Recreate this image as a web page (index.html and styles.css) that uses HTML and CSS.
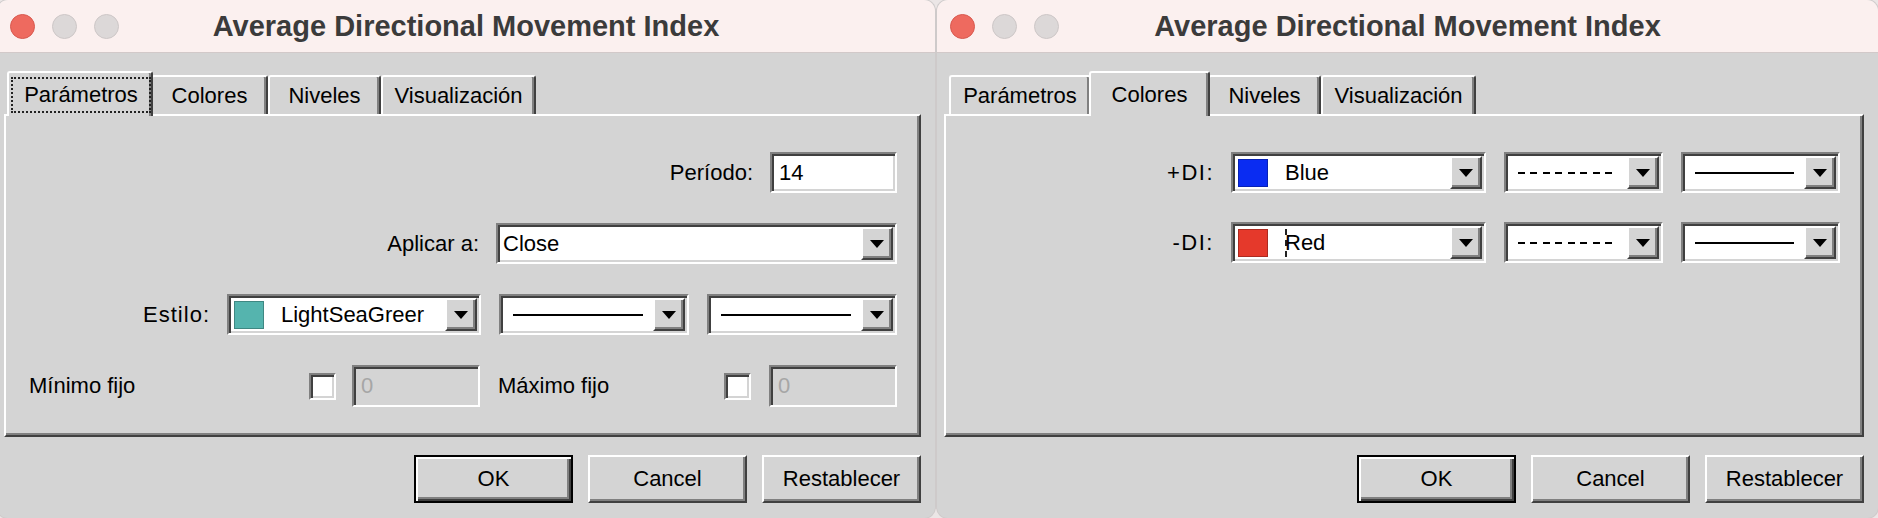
FILE: index.html
```html
<!DOCTYPE html>
<html lang="es">
<head>
    <meta charset="UTF-8">
    <meta name="viewport" content="width=device-width, initial-scale=1.0">
    <title>Average Directional Movement Index</title>
    <link rel="stylesheet" href="styles.css">
</head>
<body>
    <div class="desk">
        <!-- ventana 1: pestaña Parámetros -->
        <div class="window window-left">
            <div class="titlebar">
                <div class="lights">
                    <span class="light red"></span>
                    <span class="light"></span>
                    <span class="light"></span>
                </div>
                <div class="title">Average Directional Movement Index</div>
            </div>
            <div class="win-body">
                <div class="tabs">
                    <div class="tab tab-params active"><span class="focus">Parámetros</span></div>
                    <div class="tab tab-colors">Colores</div>
                    <div class="tab tab-levels">Niveles</div>
                    <div class="tab tab-view">Visualización</div>
                </div>
                <div class="panel">
                    <div class="row">
                        <label>Período:</label>
                        <div class="sunken input input-period">14</div>
                    </div>
                    <div class="row">
                        <label>Aplicar a:</label>
                        <div class="sunken combo combo-apply">
                            <div class="combo-value">Close</div>
                            <div class="raised drop"></div>
                        </div>
                    </div>
                    <div class="row">
                        <label class="wide-label">Estilo:</label>
                        <div class="fields">
                            <div class="sunken combo combo-color">
                                <div class="combo-value"><span class="swatch swatch-green"></span>LightSeaGreer</div>
                                <div class="raised drop"></div>
                            </div>
                            <div class="sunken combo combo-line">
                                <div class="combo-value line-value"><span class="line-solid"></span></div>
                                <div class="raised drop"></div>
                            </div>
                            <div class="sunken combo combo-line">
                                <div class="combo-value line-value"><span class="line-solid"></span></div>
                                <div class="raised drop"></div>
                            </div>
                        </div>
                    </div>
                    <div class="row-limits">
                        <div class="limit limit-min">
                            <label>Mínimo fijo</label>
                            <span class="sunken check"></span>
                            <div class="sunken input disabled">0</div>
                        </div>
                        <div class="limit limit-max">
                            <label>Máximo fijo</label>
                            <span class="sunken check"></span>
                            <div class="sunken input disabled">0</div>
                        </div>
                    </div>
                </div>
                <div class="actions">
                    <div class="btn default">OK</div>
                    <div class="btn raised">Cancel</div>
                    <div class="btn raised">Restablecer</div>
                </div>
            </div>
        </div>

        <!-- ventana 2: pestaña Colores -->
        <div class="window window-right">
            <div class="titlebar">
                <div class="lights">
                    <span class="light red"></span>
                    <span class="light"></span>
                    <span class="light"></span>
                </div>
                <div class="title">Average Directional Movement Index</div>
            </div>
            <div class="win-body">
                <div class="tabs">
                    <div class="tab tab-params">Parámetros</div>
                    <div class="tab tab-colors active">Colores</div>
                    <div class="tab tab-levels">Niveles</div>
                    <div class="tab tab-view">Visualización</div>
                </div>
                <div class="panel panel-colors">
                    <div class="row">
                        <label class="di-label">+DI:</label>
                        <div class="fields">
                            <div class="sunken combo combo-color wide">
                                <div class="combo-value"><span class="swatch swatch-blue"></span>Blue</div>
                                <div class="raised drop"></div>
                            </div>
                            <div class="sunken combo combo-style">
                                <div class="combo-value line-value"><span class="line-dash"></span></div>
                                <div class="raised drop"></div>
                            </div>
                            <div class="sunken combo combo-style">
                                <div class="combo-value line-value"><span class="line-solid"></span></div>
                                <div class="raised drop"></div>
                            </div>
                        </div>
                    </div>
                    <div class="row">
                        <label class="di-label">-DI:</label>
                        <div class="fields">
                            <div class="sunken combo combo-color wide">
                                <div class="combo-value"><span class="swatch swatch-red"></span><span class="caret"></span>Red</div>
                                <div class="raised drop"></div>
                            </div>
                            <div class="sunken combo combo-style">
                                <div class="combo-value line-value"><span class="line-dash"></span></div>
                                <div class="raised drop"></div>
                            </div>
                            <div class="sunken combo combo-style">
                                <div class="combo-value line-value"><span class="line-solid"></span></div>
                                <div class="raised drop"></div>
                            </div>
                        </div>
                    </div>
                </div>
                <div class="actions">
                    <div class="btn default">OK</div>
                    <div class="btn raised">Cancel</div>
                    <div class="btn raised">Restablecer</div>
                </div>
            </div>
        </div>
    </div>
</body>
</html>
```

FILE: styles.css
```css
* {
    box-sizing: border-box;
}

body {
    margin: 0;
    background: #ebe6e6;
    font-family: "Liberation Sans", Arial, sans-serif;
    font-size: 22px;
    color: #000;
    overflow: hidden;
}

.desk {
    display: flex;
    gap: 2px;
    height: 518px;
}

.window {
    flex: none;
    display: flex;
    flex-direction: column;
    height: 518px;
    background: #d4d4d4;
    border-radius: 11px;
    overflow: hidden;
    box-shadow: 0 0 0 1px rgba(0,0,0,0.12);
}

.window-left {
    width: 938px;
    margin-left: -3px;
}

.window-right {
    width: 941px;
}

/* barra de título estilo macOS */
.titlebar {
    flex: none;
    height: 53px;
    display: grid;
    grid-template-columns: 1fr auto 1fr;
    align-items: center;
    background: #fbf0ef;
    border-bottom: 1px solid #d2c9c9;
}

.lights {
    display: flex;
    gap: 17px;
    padding-left: 13px;
}

.light {
    width: 25px;
    height: 25px;
    border-radius: 50%;
    background: #dcd8d8;
    border: 1px solid #cdc7c7;
}

.light.red {
    background: #ee6a5f;
    border-color: #d8594f;
}

.title {
    font-weight: bold;
    font-size: 29px;
    color: #3b3b3b;
}

.win-body {
    flex: 1;
    padding: 18px 14px 0 7px;
}

/* pestañas */
.tabs {
    display: flex;
    align-items: flex-end;
    height: 43px;
    padding-left: 5px;
}

.tab {
    width: var(--w);
    height: 39px;
    display: flex;
    align-items: center;
    justify-content: center;
    border: 2px solid;
    border-color: #fff #404040 transparent #fff;
    border-bottom: 0;
    border-radius: 3px 3px 0 0;
    box-shadow: inset -2px 0 0 #808080;
}

.tab-params { --w: 142px; }
.tab-colors { --w: 117px; }
.tab-levels { --w: 113px; }
.tab-view { --w: 155px; }

.tab.active {
    position: relative;
    z-index: 1;
    width: calc(var(--w) + 4px);
    height: 45px;
    margin: 0 -2px -2px;
    background: #d4d4d4;
}

.focus {
    align-self: stretch;
    flex: 1;
    display: flex;
    align-items: center;
    justify-content: center;
    margin: 4px 0 3px 2px;
    border: 2px dotted #222;
}

.panel {
    height: 323px;
    display: flex;
    flex-direction: column;
    gap: 30px;
    padding: 36px 22px 0 0;
    border: 2px solid;
    border-color: #fff #404040 #404040 #fff;
    box-shadow: inset -2px -2px 0 #808080;
}

.panel-colors {
    gap: 29px;
}

.row {
    height: 41px;
    display: flex;
    align-items: center;
    justify-content: flex-end;
    gap: 17px;
}

.wide-label {
    letter-spacing: 1px;
}

.di-label {
    letter-spacing: 1.5px;
}

.fields {
    display: flex;
    gap: 18px;
    height: 100%;
}

/* bordes clásicos */
.sunken {
    background: #fff;
    border: 2px solid;
    border-color: #808080 #fff #fff #808080;
    box-shadow: inset 2px 2px 0 #404040, inset -2px -2px 0 #d4d4d4;
}

.raised {
    background: #d4d4d4;
    border: 2px solid;
    border-color: #fff #404040 #404040 #fff;
    box-shadow: inset -2px -2px 0 #808080;
}

.input {
    height: 41px;
    display: flex;
    align-items: center;
    padding-left: 7px;
}

.input-period {
    width: 127px;
}

.input.disabled {
    width: 128px;
    height: 42px;
    background: #d4d4d4;
    color: #a6a6a6;
}

.combo {
    height: 100%;
    display: flex;
    padding: 2px;
}

.combo-apply {
    width: 401px;
    height: 41px;
}

.combo-color {
    width: 254px;
}

.combo-color.wide {
    width: 255px;
}

.combo-line {
    width: 190px;
}

.combo-style {
    width: 159px;
}

.combo-value {
    flex: 1;
    min-width: 0;
    display: flex;
    align-items: center;
    padding-left: 3px;
    white-space: nowrap;
    overflow: hidden;
}

.line-value {
    padding: 0 10px;
}

.drop {
    flex: none;
    width: 32px;
    display: flex;
    align-items: center;
    justify-content: center;
}

.drop::after {
    content: "";
    border-left: 7px solid transparent;
    border-right: 7px solid transparent;
    border-top: 8px solid #000;
}

.swatch {
    flex: none;
    width: 30px;
    height: 28px;
    margin-right: 17px;
    border: 1px solid rgba(0,0,0,0.25);
}

.swatch-green { background: #55b4ae; }
.swatch-blue { background: #0a2cf2; }
.swatch-red { background: #e5392b; }

.caret {
    width: 0;
    height: 28px;
    margin-right: -2px;
    border-left: 2px dashed #222;
}

.line-solid {
    flex: 1;
    height: 2px;
    background: #000;
}

.line-dash {
    flex: 1;
    height: 2px;
    background: repeating-linear-gradient(90deg, #000 0 7px, transparent 7px 12.5px);
}

/* fila mínimo / máximo */
.row-limits {
    height: 42px;
    display: flex;
    gap: 18px;
    padding-left: 23px;
}

.limit {
    display: flex;
    align-items: center;
    gap: 16px;
}

.limit label {
    flex: 1;
}

.limit-min {
    flex: 1;
}

.limit-max {
    width: 399px;
    gap: 18px;
}

.check {
    width: 27px;
    height: 27px;
}

/* botones */
.actions {
    display: flex;
    justify-content: flex-end;
    gap: 15px;
    margin-top: 18px;
}

.btn {
    width: 159px;
    height: 48px;
    display: flex;
    align-items: center;
    justify-content: center;
}

.btn.default {
    background: #d4d4d4;
    border: 2px solid #000;
    box-shadow: inset 2px 2px 0 #fff, inset -2px -2px 0 #404040, inset -4px -4px 0 #808080;
}
```
